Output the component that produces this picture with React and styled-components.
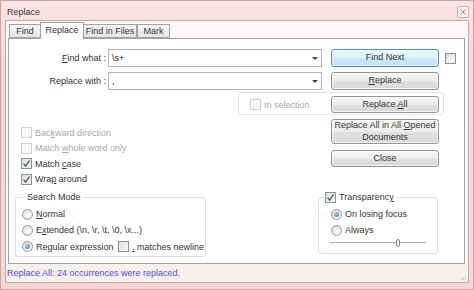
import React from "react";
import styled, { createGlobalStyle } from "styled-components";

const GlobalStyle = createGlobalStyle`
  html, body {
    margin: 0;
    padding: 0;
  }
  body {
    width: 474px;
    height: 290px;
    overflow: hidden;
    font-family: "Liberation Sans", Arial, sans-serif;
    font-size: 9px;
    color: #333;
  }
`;

const Window = styled.div`
  box-sizing: border-box;
  width: 474px;
  height: 290px;
  border: 1px solid #c9a3a3;
  background: linear-gradient(#fbe4e4, #f6d9d9 60px, #f4d6d6);
  display: flex;
  flex-direction: column;
`;

const TitleBar = styled.div`
  box-sizing: border-box;
  height: 19px;
  padding: 3px 4px 0 6px;
  display: flex;
  align-items: center;
`;

const Title = styled.div`
  color: #3a3a3a;
  line-height: 11px;
`;

const CloseBtn = styled.div`
  box-sizing: border-box;
  margin-left: auto;
  width: 12px;
  height: 12px;
  border: 1px solid #cfadad;
  border-radius: 2px;
  background: #fbeeee;
  display: flex;
  align-items: center;
  justify-content: center;
`;

const Client = styled.div`
  box-sizing: border-box;
  margin: 0 4px;
  height: 263px;
  border: 1px solid #c9a6a6;
  background: #fdf8f8;
  display: flex;
  flex-direction: column;
`;

const TabStrip = styled.div`
  margin-top: 1px;
  height: 16px;
  padding-left: 3px;
  display: flex;
  align-items: flex-end;
`;

const Tab = styled.div`
  box-sizing: border-box;
  width: ${(p) => p.$w}px;
  height: ${(p) => (p.$active ? 17 : 14)}px;
  margin: 0 ${(p) => (p.$active ? -1 : 0)}px ${(p) => (p.$active ? -1 : 0)}px;
  border: 1px solid #a3a3a3;
  border-bottom: ${(p) => (p.$active ? "none" : "1px solid #a3a3a3")};
  background: ${(p) =>
    p.$active ? "#fff" : "linear-gradient(#f5f5f5, #e6e6e6)"};
  text-align: center;
  line-height: ${(p) => (p.$active ? 15 : 13)}px;
  position: relative;
  z-index: ${(p) => (p.$active ? 1 : 0)};
`;

const Panel = styled.div`
  box-sizing: border-box;
  margin: 0 3px 0 2px;
  height: 226px;
  border: 1px solid #a3a3a3;
  background: #fff;
  padding-top: 10px;
  display: flex;
  flex-direction: column;
`;

const FieldRow = styled.div`
  display: flex;
  align-items: center;
  height: 18px;
  & + & {
    margin-top: 5px;
  }
`;

const FieldLabel = styled.label`
  width: 97px;
  margin-right: 2px;
  text-align: right;
  white-space: nowrap;
`;

const Combo = styled.div`
  box-sizing: border-box;
  width: 214px;
  height: 18px;
  border: 1px solid #b3b5ba;
  background: #fff;
  padding: 0 3px 0 3px;
  display: flex;
  align-items: center;
  justify-content: space-between;
  color: #222;
`;

const ComboArrow = styled.span`
  width: 0;
  height: 0;
  border-left: 3px solid transparent;
  border-right: 3px solid transparent;
  border-top: 3px solid #444;
`;

const Button = styled.button`
  box-sizing: border-box;
  width: 108px;
  height: ${(p) => p.$h || 18}px;
  margin: 0 0 0 ${(p) => p.$ml || 0}px;
  padding: 0 2px;
  font: inherit;
  line-height: 11.5px;
  color: #333;
  border: 1px solid ${(p) => (p.$primary ? "#4a8ec2" : "#939393")};
  border-radius: 3px;
  background: ${(p) =>
    p.$primary
      ? "linear-gradient(#eef8fd, #dff2fc 50%, #cbeafb 51%, #bde3f7)"
      : "linear-gradient(#f7f7f7, #ececec 50%, #e1e1e1 51%, #d8d8d8)"};
  box-shadow: inset 0 0 0 1px rgba(255, 255, 255, 0.7);
`;

const Box = styled.span`
  box-sizing: border-box;
  flex: none;
  width: 11px;
  height: 11px;
  margin-left: ${(p) => p.$ml || 0}px;
  border: 1px solid ${(p) => (p.$disabled ? "#d0d0d0" : "#8e8f8f")};
  background: ${(p) =>
    p.$disabled ? "#f7f7f7" : "linear-gradient(135deg, #dedede, #fbfbfb)"};
  display: flex;
  align-items: center;
  justify-content: center;
`;

const Round = styled.span`
  box-sizing: border-box;
  flex: none;
  width: 11px;
  height: 11px;
  border-radius: 50%;
  border: 1px solid #989898;
  background: radial-gradient(circle at 65% 65%, #fdfdfd, #d6d6d6);
  display: flex;
  align-items: center;
  justify-content: center;
  &::after {
    content: "";
    display: ${(p) => (p.$checked ? "block" : "none")};
    width: 5px;
    height: 5px;
    border-radius: 50%;
    background: radial-gradient(circle at 35% 35%, #a9d8f6, #2a72b8);
  }
`;

const OptionRow = styled.label`
  display: flex;
  align-items: center;
  gap: ${(p) => p.$gap ?? 3}px;
  width: ${(p) => (p.$w ? `${p.$w}px` : "auto")};
  height: ${(p) => p.$h || 15}px;
  color: ${(p) => (p.$disabled ? "#a8a8a8" : "#333")};
  white-space: nowrap;
  flex: none;
`;

const U = styled.span`
  text-decoration: underline;
`;

const SelectionBox = styled.div`
  box-sizing: border-box;
  margin: 2px 0 0 229px;
  width: 206px;
  height: 23px;
  padding: 3px 0 1px 11px;
  border: 1px solid #e4e4e4;
  border-radius: 3px;
  display: flex;
  align-items: center;
`;

const Middle = styled.div`
  display: grid;
  grid-template-columns: 322px 108px;
  height: 76px;
`;

const OptionList = styled.div`
  padding: 10px 0 0 12px;
  display: flex;
  flex-direction: column;
`;

const ButtonStack = styled.div`
  padding-top: 4px;
  display: flex;
  flex-direction: column;
  gap: 6px;
`;

const Bottom = styled.div`
  display: flex;
  align-items: flex-start;
`;

const GroupBox = styled.fieldset`
  box-sizing: border-box;
  min-width: 0;
  margin: 1px 0 0 ${(p) => p.$ml}px;
  width: ${(p) => p.$w}px;
  padding: ${(p) => p.$pad};
  border: 1px solid #dedede;
  border-radius: 3px;
  display: flex;
  flex-direction: column;
`;

const Legend = styled.legend`
  margin-left: ${(p) => p.$ml}px;
  padding: 0 2px 0 ${(p) => p.$pl ?? 2}px;
  height: 11px;
  line-height: 11px;
  display: flex;
  align-items: center;
  gap: 3px;
  color: #333;
  background: #fff;
`;

const StatusBar = styled.div`
  box-sizing: border-box;
  height: 18px;
  padding: 0 1px 0 1px;
  background: #f8efef;
  display: flex;
  align-items: center;
  justify-content: space-between;
  color: #4f4fd6;
`;

const Grip = styled.svg`
  align-self: flex-end;
  margin-bottom: 1px;
`;

const Check = ({ checked, disabled, ml }) => (
  <Box $disabled={disabled} $ml={ml}>
    {checked && (
      <svg width="9" height="9" viewBox="0 0 9 9">
        <path
          d="M1.6 4.6 L3.6 7.2 L7.6 1.4"
          fill="none"
          stroke="#3f5689"
          strokeWidth="1.3"
        />
      </svg>
    )}
  </Box>
);

const Slider = () => (
  <svg width="97" height="10" viewBox="0 0 97 10" style={{ marginLeft: -1 }}>
    <line x1="0" y1="4.5" x2="96" y2="4.5" stroke="#b4b4b4" />
    <line x1="0" y1="5.5" x2="96" y2="5.5" stroke="#f0f0f0" />
    <rect x="66.5" y="1.5" width="3" height="7" rx="1.5" fill="#f4f4f4" stroke="#8a8a8a" />
  </svg>
);

const tabs = [
  { label: "Find", w: 32 },
  { label: "Replace", w: 44, active: true },
  { label: "Find in Files", w: 54 },
  { label: "Mark", w: 33 },
];

export default function App() {
  return (
    <>
      <GlobalStyle />
      <Window>
        <TitleBar>
          <Title>Replace</Title>
          <CloseBtn>
            <svg width="6" height="6" viewBox="0 0 6 6">
              <path d="M0.5 0.5 L5.5 5.5 M5.5 0.5 L0.5 5.5" stroke="#a08f8f" strokeWidth="1" />
            </svg>
          </CloseBtn>
        </TitleBar>
        <Client>
          <TabStrip>
            {tabs.map((t) => (
              <Tab key={t.label} $w={t.w} $active={t.active}>
                {t.label}
              </Tab>
            ))}
          </TabStrip>
          <Panel>
            <FieldRow>
              <FieldLabel>
                <U>F</U>ind what :
              </FieldLabel>
              <Combo>
                <span>\s+</span>
                <ComboArrow />
              </Combo>
              <Button $ml={9} $primary>
                Find Next
              </Button>
              <Check ml={6} />
            </FieldRow>
            <FieldRow>
              <FieldLabel>Replace with :</FieldLabel>
              <Combo>
                <span>,</span>
                <ComboArrow />
              </Combo>
              <Button $ml={9}>
                <U>R</U>eplace
              </Button>
            </FieldRow>

            <SelectionBox>
              <OptionRow $w={81} $disabled>
                <Check disabled />
                <span>In selection</span>
              </OptionRow>
              <Button $h={17}>
                Replace <U>A</U>ll
              </Button>
            </SelectionBox>

            <Middle>
              <OptionList>
                <OptionRow $h={15.5} $disabled>
                  <Check disabled />
                  <span>
                    Bac<U>k</U>ward direction
                  </span>
                </OptionRow>
                <OptionRow $h={15.5} $disabled>
                  <Check disabled />
                  <span>
                    Match <U>w</U>hole word only
                  </span>
                </OptionRow>
                <OptionRow $h={15.5}>
                  <Check checked />
                  <span>
                    Match <U>c</U>ase
                  </span>
                </OptionRow>
                <OptionRow $h={15.5}>
                  <Check checked />
                  <span>
                    Wra<U>p</U> around
                  </span>
                </OptionRow>
              </OptionList>
              <ButtonStack>
                <Button $h={25}>
                  Replace All in All <U>O</U>pened
                  <br />
                  Documents
                </Button>
                <Button $h={17}>Close</Button>
              </ButtonStack>
            </Middle>

            <Bottom>
              <GroupBox $ml={6} $w={191} $pad="3px 0 1px 6px">
                <Legend $ml={3}>Search Mode</Legend>
                <OptionRow $h={16.3}>
                  <Round />
                  <span>
                    <U>N</U>ormal
                  </span>
                </OptionRow>
                <OptionRow $h={16.3}>
                  <Round />
                  <span>
                    E<U>x</U>tended (\n, \r, \t, \0, \x...)
                  </span>
                </OptionRow>
                <OptionRow $h={16.3} $gap={0}>
                  <OptionRow $w={96} $h={16.3}>
                    <Round $checked />
                    <span>
                      Re<U>g</U>ular expression
                    </span>
                  </OptionRow>
                  <OptionRow $h={16.3}>
                    <Check />
                    <span>
                      <U>.</U> matches newline
                    </span>
                  </OptionRow>
                </OptionRow>
              </GroupBox>

              <GroupBox $ml={112} $w={120} $pad="3px 0 5px 12px">
                <Legend $ml={-6} $pl={0}>
                  <Check checked />
                  <span>
                    Transparenc<U>y</U>
                  </span>
                </Legend>
                <OptionRow $h={16}>
                  <Round $checked />
                  <span>On losing focus</span>
                </OptionRow>
                <OptionRow $h={16}>
                  <Round />
                  <span>Always</span>
                </OptionRow>
                <Slider />
              </GroupBox>
            </Bottom>
          </Panel>
          <StatusBar>
            <span>Replace All: 24 occurrences were replaced.</span>
            <Grip width="7" height="7" viewBox="0 0 7 7">
              <g fill="#c8b4b4">
                <rect x="5" y="1" width="1" height="1" />
                <rect x="3" y="3" width="1" height="1" />
                <rect x="5" y="3" width="1" height="1" />
                <rect x="1" y="5" width="1" height="1" />
                <rect x="3" y="5" width="1" height="1" />
                <rect x="5" y="5" width="1" height="1" />
              </g>
            </Grip>
          </StatusBar>
        </Client>
      </Window>
    </>
  );
}
